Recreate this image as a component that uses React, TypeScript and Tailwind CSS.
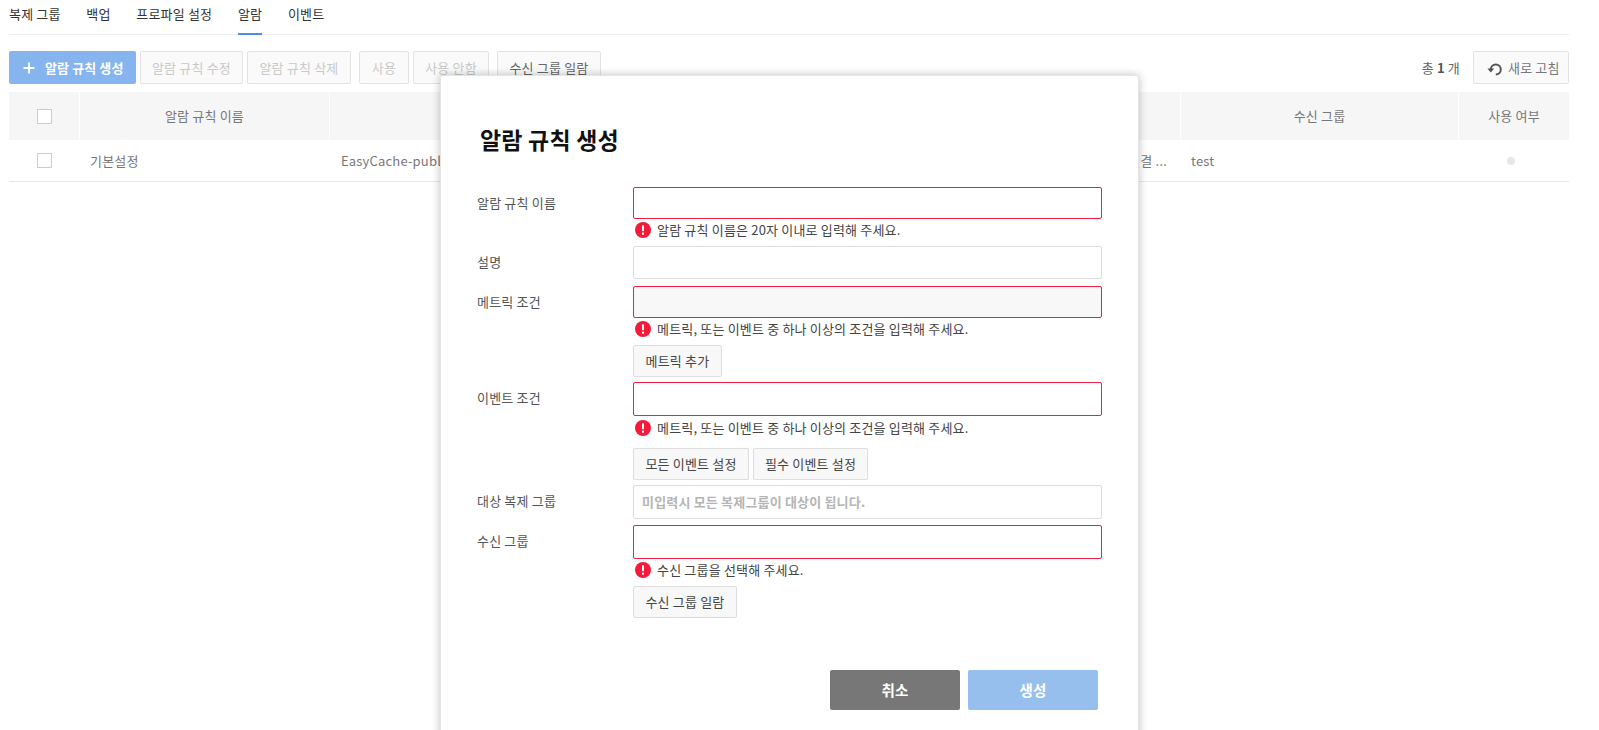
const FONT = "font-['Noto_Sans_CJK_KR','Noto_Sans',sans-serif]";

const tabs = ["복제 그룹", "백업", "프로파일 설정", "알람", "이벤트"];

function ToolButton({ label, disabled, className = "" }: { label: string; disabled?: boolean; className?: string }) {
  return (
    <button
      className={`flex h-[33px] items-center justify-center rounded-[2px] border border-[#e3e3e3] bg-[#fafafa] text-[13px] ${
        disabled ? "text-[#c9c9c9]" : "text-[#666]"
      } ${className}`}
    >
      {label}
    </button>
  );
}

function ErrorIcon() {
  return (
    <svg width="16" height="16" viewBox="0 0 16 16" className="shrink-0">
      <circle cx="8" cy="8" r="8" fill="#f5193a" />
      <rect x="7" y="3.2" width="2" height="6" rx="0.6" fill="#fff" />
      <rect x="7" y="10.6" width="2" height="2.1" rx="0.5" fill="#fff" />
    </svg>
  );
}

function ErrorText({ children, className = "" }: { children: string; className?: string }) {
  return (
    <div className={`flex h-[20px] items-center gap-[6px] pl-[2px] text-[13px] text-[#444] ${className}`}>
      <ErrorIcon />
      <span>{children}</span>
    </div>
  );
}

function Field({ invalid, className = "", children }: { invalid?: boolean; className?: string; children?: React.ReactNode }) {
  return (
    <div
      className={`flex w-[469px] items-center rounded-[2px] border px-[8px] ${
        invalid ? "border-[#f01f3d]" : "border-[#dcdcdc]"
      } ${className}`}
    >
      {children}
    </div>
  );
}

function FormButton({ label, className = "" }: { label: string; className?: string }) {
  return (
    <button
      className={`flex h-[32px] items-center justify-center rounded-[2px] border border-[#dedede] bg-[#f8f8f8] text-[13px] text-[#444] ${className}`}
    >
      {label}
    </button>
  );
}

function Row({ label, className = "", children }: { label: string; className?: string; children: React.ReactNode }) {
  return (
    <div className={`flex ${className}`}>
      <div className="w-[156px] shrink-0 pt-[6px] text-[13px] leading-[20px] text-[#555]">{label}</div>
      <div className="flex flex-col">{children}</div>
    </div>
  );
}

export default function App() {
  return (
    <div className={`relative h-[730px] w-full overflow-hidden bg-white tracking-[0.18px] ${FONT}`}>
      <div className="mx-[9px] w-[1560px]">
        <nav className="flex h-[35px] gap-[25.7px] border-b border-[#eee] text-[13px] text-[#333]">
          {tabs.map((t) => (
            <div
              key={t}
              className={`-mb-px h-[35px] pt-[4px] leading-[20px] ${t === "알람" ? "border-b-2 border-[#4a90e2]" : ""}`}
            >
              {t}
            </div>
          ))}
        </nav>

        <div className="mt-[16px] flex items-center">
          <button className="flex h-[33px] w-[127px] items-center gap-[10px] rounded-[2px] bg-[#85b4ee] pl-[14px] text-[13px] font-bold tracking-[0.1px] text-white">
            <svg width="12" height="12" viewBox="0 0 12 12">
              <path d="M6 0.5v11M0.5 6h11" stroke="#fff" strokeWidth="1.8" />
            </svg>
            알람 규칙 생성
          </button>
          <ToolButton label="알람 규칙 수정" disabled className="ml-[4px] w-[103px]" />
          <ToolButton label="알람 규칙 삭제" disabled className="ml-[4px] w-[104px]" />
          <ToolButton label="사용" disabled className="ml-[8px] w-[50px]" />
          <ToolButton label="사용 안함" disabled className="ml-[4px] w-[76px]" />
          <ToolButton label="수신 그룹 일람" className="ml-[8px] w-[104px]" />
          <div className="ml-auto mr-[13px] text-[13px] text-[#666]">
            총 <b className="font-bold text-[#555]">1</b> 개
          </div>
          <button className="flex h-[33px] w-[96px] items-center gap-[5px] rounded-[2px] border border-[#e3e3e3] bg-[#fafafa] pl-[13px] text-[13px] text-[#777]">
            <svg width="16" height="15" viewBox="0 0 16 15" className="mt-[4px]">
              <path d="M3.8 7.6A5 5 0 1 1 8.8 12.6" fill="none" stroke="#555" strokeWidth="2" />
              <path d="M0.4 6.6h6.8l-3.4 4z" fill="#555" />
            </svg>
            새로 고침
          </button>
        </div>

        <div className="mt-[8px] text-[13px] text-[#777]">
          <div className="grid h-[48px] grid-cols-[71px_250px_851px_278px_110px] bg-[#f6f6f6] text-center">
            <div className="flex items-center justify-center border-r border-white">
              <span className="h-[15px] w-[15px] border border-[#ccc] bg-white" />
            </div>
            <div className="flex items-center justify-center border-r border-white">알람 규칙 이름</div>
            <div className="flex items-center justify-center border-r border-white">복제 그룹</div>
            <div className="flex items-center justify-center border-r border-white">수신 그룹</div>
            <div className="flex items-center justify-center">사용 여부</div>
          </div>
          <div className="grid h-[42px] grid-cols-[71px_250px_851px_278px_110px] border-b border-[#e8e8e8]">
            <div className="flex items-center justify-center">
              <span className="h-[15px] w-[15px] border border-[#ccc] bg-white" />
            </div>
            <div className="flex items-center px-[10px]">기본설정</div>
            <div className="flex items-center justify-between pl-[11px] pr-[14px]">
              <span>EasyCache-public</span>
              <span>연결 ...</span>
            </div>
            <div className="flex items-center px-[10px]">test</div>
            <div className="flex items-center justify-center pr-[6px]">
              <span className="h-[8px] w-[8px] rounded-full bg-[#e8e8e8]" />
            </div>
          </div>
        </div>
      </div>

      {/* 모달 */}
      <div className="absolute left-[440px] top-[75px] h-[680px] w-[699px] rounded-[3px] border border-[#e5e5e5] bg-white pl-[36px] pt-[46px] shadow-[0_0_8px_rgba(0,0,0,0.25)]">
        <h2 className="pl-[3px] text-[23px] font-bold leading-[34px] text-[#111]">알람 규칙 생성</h2>

        <Row label="알람 규칙 이름" className="mt-[31px]">
          <Field invalid className="h-[32px]" />
          <ErrorText className="mt-[1px]">알람 규칙 이름은 20자 이내로 입력해 주세요.</ErrorText>
        </Row>
        <Row label="설명" className="mt-[6px]">
          <Field className="h-[33px]" />
        </Row>
        <Row label="메트릭 조건" className="mt-[7px]">
          <Field invalid className="h-[32px] bg-[#f8f8f8]" />
          <ErrorText className="mt-[1px]">메트릭, 또는 이벤트 중 하나 이상의 조건을 입력해 주세요.</ErrorText>
          <FormButton label="메트릭 추가" className="mt-[6px] w-[89px]" />
        </Row>
        <Row label="이벤트 조건" className="mt-[5px]">
          <Field invalid className="h-[34px]" />
          <ErrorText className="mt-[2px]">메트릭, 또는 이벤트 중 하나 이상의 조건을 입력해 주세요.</ErrorText>
          <div className="mt-[10px] flex gap-[4px]">
            <FormButton label="모든 이벤트 설정" className="w-[116px]" />
            <FormButton label="필수 이벤트 설정" className="w-[115px]" />
          </div>
        </Row>
        <Row label="대상 복제 그룹" className="mt-[5px]">
          <Field className="h-[34px] text-[13px] font-bold text-[#b5b5b5]">미입력시 모든 복제그룹이 대상이 됩니다.</Field>
        </Row>
        <Row label="수신 그룹" className="mt-[6px]">
          <Field invalid className="h-[34px]" />
          <ErrorText className="mt-[1px]">수신 그룹을 선택해 주세요.</ErrorText>
          <FormButton label="수신 그룹 일람" className="mt-[6px] w-[104px]" />
        </Row>

        <div className="mt-[52px] flex justify-end gap-[8px] pr-[40px]">
          <button className="h-[40px] w-[130px] rounded-[2px] bg-[#777] text-[14.5px] font-bold text-white">취소</button>
          <button className="h-[40px] w-[130px] rounded-[2px] bg-[#97bfee] text-[14.5px] font-bold text-white">생성</button>
        </div>
      </div>
    </div>
  );
}
